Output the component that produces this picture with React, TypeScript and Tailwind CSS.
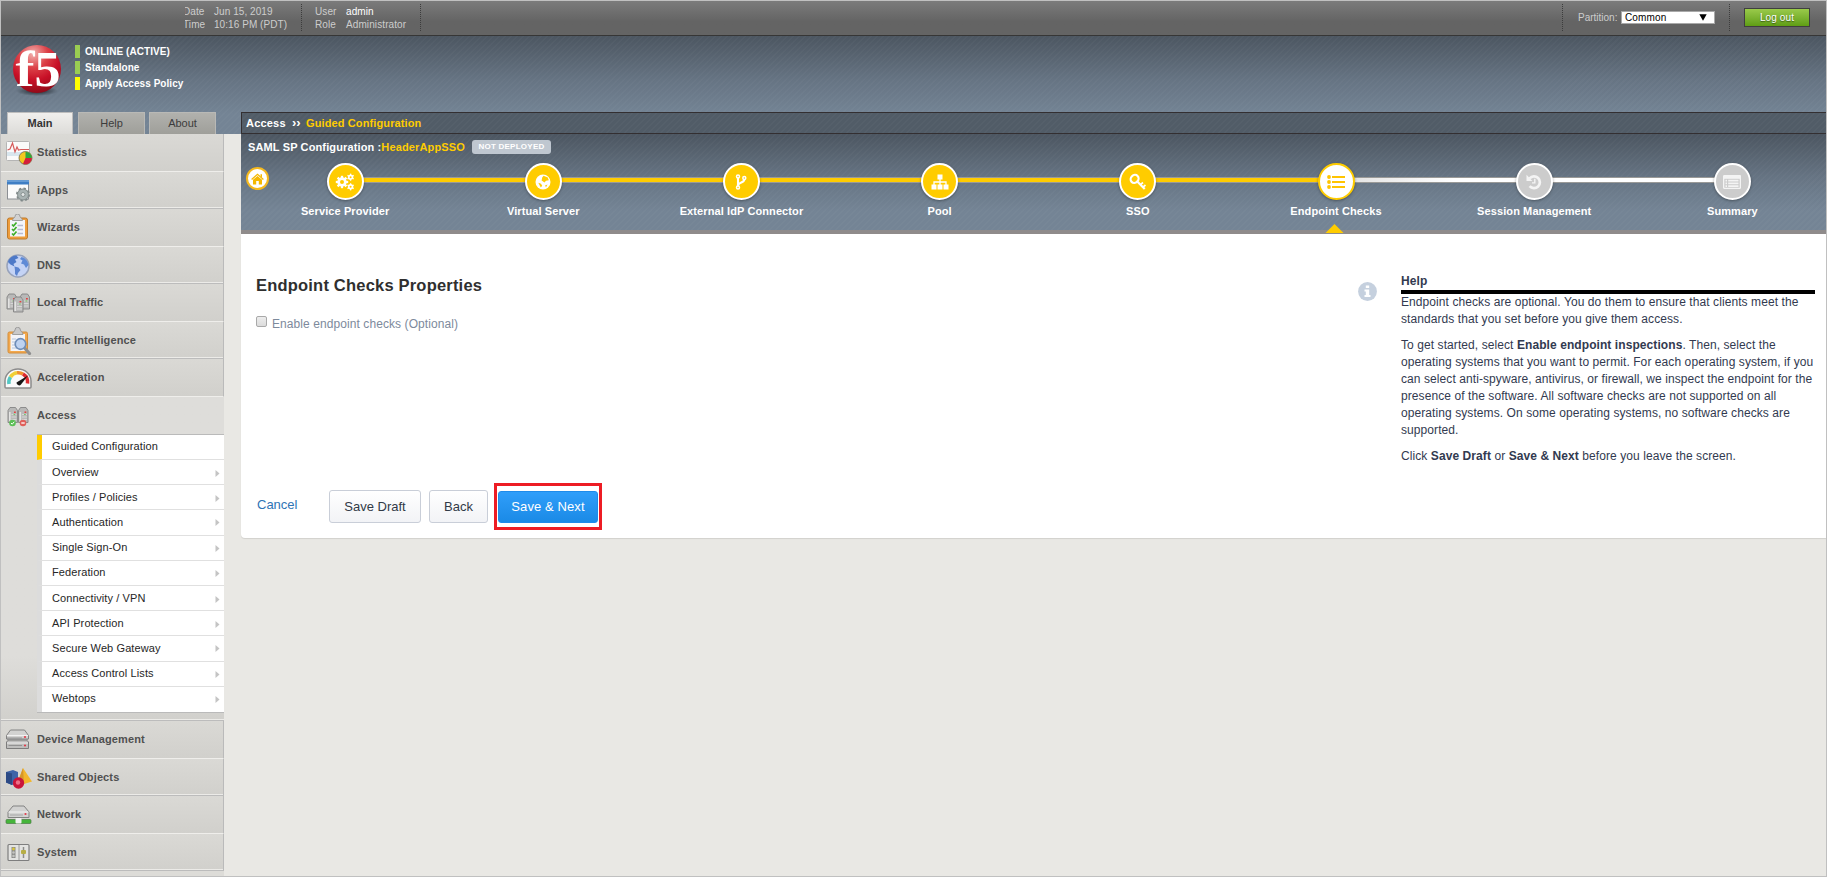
import React from "react";

const STRIPES =
  "bg-[repeating-linear-gradient(135deg,rgba(255,255,255,0.024)_0,rgba(255,255,255,0.024)_1.5px,transparent_1.5px,transparent_4.24px),linear-gradient(to_bottom,#4c5661_0%,#667483_45%,#748495_80%,#748495_100%)]";

/* ---------- sidebar icons ---------- */

const StatisticsIcon = () => (
  <svg width="30" height="28" viewBox="0 0 30 28">
    <rect x="1.5" y="2.5" width="23" height="19" rx="1" fill="#fafafa" stroke="#b5b5b5" />
    <rect x="2" y="13" width="22" height="4" fill="#d8e6ee" />
    <path d="M2.500 11 5 10 7.500 4 10 13 12 8 13.500 11 16 10.500H24" fill="none" stroke="#d65a5a" strokeWidth="1.200" />
    <circle cx="20.500" cy="19" r="6.500" fill="#f2c81e" stroke="#6e6a52" strokeWidth=".8" />
    <path d="M20.500 19V12.700A6.300 6.300 0 0 1 26.800 19Z" fill="#2fa63c" />
    <path d="M20.500 19H26.800A6.300 6.300 0 0 1 18 24.800Z" fill="#d31f3c" />
  </svg>
);

const IAppsIcon = () => (
  <svg width="30" height="28" viewBox="0 0 30 28">
    <rect x="2.500" y="3.500" width="21" height="18.500" fill="#fbfbfb" stroke="#8c8f94" />
    <rect x="2" y="3" width="22" height="4.500" fill="#3f7ec4" />
    <path d="M2 4H24" stroke="#8db8e4" />
    <circle cx="18" cy="17.500" r="5.900" fill="#9fa8a8" stroke="#7f8888" strokeWidth="2.200" strokeDasharray="2.300 2.300" />
    <circle cx="18" cy="17.500" r="5.400" fill="#a9b3b3" stroke="#848d8d" strokeWidth=".8" />
    <circle cx="18" cy="17.500" r="2" fill="#e3e6e6" stroke="#7c8585" strokeWidth=".8" />
  </svg>
);

const WizardsIcon = () => (
  <svg width="30" height="28" viewBox="0 0 30 28">
    <rect x="2.500" y="4" width="20" height="21" rx="2" fill="#ee9d3c" stroke="#bf7a2b" />
    <rect x="5" y="6" width="15" height="16.500" fill="#f4f5fa" />
    <path d="M7.500 6.500C7.500 4 9.500 4.500 10 2.500A2.500 2.500 0 0 1 15 2.500C15.500 4.500 17.500 4 17.500 6.500Z" fill="#d2d2d2" stroke="#8f8f8f" strokeWidth=".8" />
    <path d="M7 10.500 8.500 12 11.500 8.500M7 15 8.500 16.500 11.500 13M7 19.500 8.500 21 11.500 17.500" fill="none" stroke="#3fae2a" strokeWidth="1.700" />
    <path d="M12.500 11.500H18M12.500 15.500H18M12.500 19.500H18" stroke="#b8bcd2" strokeWidth="1.400" />
  </svg>
);

const DnsIcon = () => (
  <svg width="30" height="28" viewBox="0 0 30 28">
    <circle cx="13" cy="14" r="11" fill="#c4d3f5" stroke="#98a3bb" strokeWidth="1.500" />
    <path d="M3 10C4 6 7.500 3.500 11.500 3.500L13.500 6 10 7.500 11.500 10 8.500 12 9.500 14.500 5.500 12.500Z" fill="#4d79c8" />
    <path d="M9.500 14.500 13.500 15.500 15.500 18 13 21 12 24 10 22 10 18.500Z" fill="#5b84d0" />
    <path d="M16.500 5C20.500 6 23 9 23.500 13L21 16 19 12.500 16 11.500 17.500 8.500 15 7Z" fill="#5f8ad6" />
  </svg>
);

const Server = ({ x, y }: { x: number; y: number }) => (
  <g transform={`translate(${x} ${y})`}>
    <path d="M.5 3.500 2.500 .5H8L10 3.500V15.500H.5Z" fill="#b9b9b8" stroke="#858585" strokeWidth=".9" />
    <path d="M2.300 5V14.500" stroke="#e3e3e2" strokeWidth="1.600" />
    <path d="M4 7.500H9M4 10H9M4 12.500H9" stroke="#dedede" strokeWidth=".8" />
    <path d="M6.500 5.200H8.300" stroke="#e5423f" strokeWidth="1.500" />
    <path d="M6 7.500H7.800" stroke="#7cc36a" strokeWidth="1.200" />
  </g>
);

const LocalTrafficIcon = () => (
  <svg width="30" height="28" viewBox="0 0 30 28">
    <Server x={1.5} y={4.5} />
    <Server x={14.5} y={4.5} />
    <Server x={8} y={7.5} />
  </svg>
);

const TrafficIntelIcon = () => (
  <svg width="30" height="28" viewBox="0 0 30 28">
    <rect x="3" y="5" width="19.500" height="21" rx="1.500" fill="#f3a84c" stroke="#d28e3c" />
    <rect x="5.500" y="7" width="14.500" height="17" fill="#f3f4f8" />
    <path d="M7.500 7.500C7.500 5 9.500 5 10 3A2.700 2.700 0 0 1 15.400 3C16 5 18 5 18 7.500Z" fill="#c9c9c9" stroke="#8f8f8f" strokeWidth=".8" />
    <path d="M7 12H11M7 15H10M7 18H10M7 21H12" stroke="#b6c6dd" />
    <path d="M19.500 21 24.500 26.500" stroke="#8f8f8f" strokeWidth="3.200" strokeLinecap="round" />
    <circle cx="15.500" cy="17" r="5.300" fill="#bed2f0" stroke="#6e8db8" strokeWidth="1.700" />
  </svg>
);

const AccelerationIcon = () => (
  <svg width="32" height="28" viewBox="0 0 32 28" className="-ml-[2px] shrink-0">
    <path d="M2 23V17A13 12 0 0 1 28 17V23Q28 24 27 24H3Q2 24 2 23Z" fill="#fafafa" stroke="#8b8b8b" strokeWidth="1.500" />
    <path d="M6 20A9.500 9.500 0 0 1 7.500 13" fill="none" stroke="#54c8c4" strokeWidth="3.600" />
    <path d="M7.500 13A9.500 9.500 0 0 1 14 8.800" fill="none" stroke="#f1cf35" strokeWidth="3.600" />
    <path d="M14 8.800A9.500 9.500 0 0 1 20 10" fill="none" stroke="#f0902c" strokeWidth="3.600" />
    <path d="M20 10A9.500 9.500 0 0 1 24.500 19.500" fill="none" stroke="#de2b30" strokeWidth="3.600" />
    <path d="M13.500 18.500 25 11.500 18 20.500A2.600 2.600 0 0 1 13.500 18.500Z" fill="#161616" />
  </svg>
);

const AccessIcon = () => (
  <svg width="30" height="28" viewBox="0 0 30 28">
    <Server x={2.5} y={5} />
    <Server x={13} y={5} />
    <circle cx="7.500" cy="21" r="3.300" fill="#5bbf56" />
    <path d="M6 21 7.200 22.200 9.200 19.800" stroke="#fff" fill="none" />
    <circle cx="18" cy="21" r="3.300" fill="#e0605a" />
    <path d="M16.300 21H19.700" stroke="#fff" strokeWidth="1.300" />
  </svg>
);

const DeviceIcon = () => (
  <svg width="30" height="28" viewBox="0 0 30 28">
    <path d="M1.500 9.500 5.500 4H19.500L23.500 9.500V13H1.500Z" fill="#d2d2d1" stroke="#828282" />
    <path d="M1.500 16 3.500 14H21.500L23.500 16V22.500H1.500Z" fill="#bebebd" stroke="#7c7c7c" />
    <path d="M2 9.500H23M2 17H23" stroke="#f1f1f1" />
    <path d="M2 12H17M2 13.500H23M3.500 19.500H17" stroke="#929292" />
    <circle cx="20" cy="11" r="1.100" fill="#e23b4b" />
    <circle cx="20" cy="19.500" r="1.100" fill="#e23b4b" />
  </svg>
);

const SharedIcon = () => (
  <svg width="32" height="28" viewBox="0 0 32 28" className="-ml-px shrink-0">
    <path d="M2 8 9 6 14 8V19L8 21 2 18.500Z" fill="#3d63a8" />
    <path d="M8 9.500V21L2 18.500V8Z" fill="#2c4a85" />
    <path d="M19 4 28 17.500 20 20 14 17.500Z" fill="#f2b62c" />
    <path d="M19 4 20 20 14 17.500Z" fill="#d6962a" />
    <circle cx="14.500" cy="19" r="5.700" fill="#c9143a" />
    <circle cx="14" cy="18.500" r="2.200" fill="#ee6f87" />
  </svg>
);

const NetworkIcon = () => (
  <svg width="30" height="28" viewBox="0 0 30 28">
    <path d="M3 11 8 5H19L24 11V16.500H3Z" fill="#d2d2d1" stroke="#828282" />
    <path d="M3.500 11H23.500" stroke="#f3f3f3" />
    <path d="M5 14H18" stroke="#a6a6a6" />
    <circle cx="20.500" cy="13" r="1.100" fill="#e23b4b" />
    <rect x="1" y="18.500" width="25" height="4" rx="1" fill="#45b53a" stroke="#4a7a45" strokeWidth=".7" />
    <rect x="10.500" y="17" width="6" height="5.500" rx="1" fill="#f1f1f1" />
  </svg>
);

const SystemIcon = () => (
  <svg width="30" height="28" viewBox="0 0 30 28">
    <rect x="3" y="5.500" width="21" height="16" rx="1" fill="#e3e3e1" stroke="#7e7e7e" strokeWidth="1.200" />
    <path d="M14 6V21" stroke="#9a9a9a" />
    <rect x="6.500" y="8" width="4" height="11" fill="#8c8c8a" />
    <circle cx="8.500" cy="10" r="1.400" fill="#d9c63a" />
    <circle cx="8.500" cy="13.500" r="1.300" fill="#c3c3c0" />
    <circle cx="8.500" cy="17" r="1.300" fill="#c3c3c0" />
    <path d="M18.500 8V19" stroke="#8c8c8a" strokeWidth="1.500" />
    <rect x="16" y="11" width="5" height="4" rx="1" fill="#b7ae45" />
  </svg>
);

/* ---------- wizard step icons ---------- */

const gear = (cx: number, cy: number, r: number, hole: number, teeth: number) => (
  <>
    <circle cx={cx} cy={cy} r={(r + hole) / 2} fill="none" stroke="currentColor" strokeWidth={r - hole} />
    {Array.from({ length: teeth }, (_, i) => (
      <rect
        key={i}
        x={cx - r * 0.24}
        y={cy - r * 1.32}
        width={r * 0.48}
        height={r * 0.6}
        fill="currentColor"
        transform={`rotate(${(360 / teeth) * i} ${cx} ${cy})`}
      />
    ))}
  </>
);

const GearsIcon = () => (
  <svg width="20" height="18" viewBox="0 0 20 18">
    {gear(7, 9, 4.7, 2, 8)}
    {gear(15.6, 4.2, 2.7, 1, 6)}
    {gear(15.6, 13.8, 2.7, 1, 6)}
  </svg>
);

const GlobeIcon = () => (
  <svg width="16" height="16" viewBox="0 0 16 16">
    <circle cx="8" cy="8" r="7.500" fill="currentColor" />
    <path d="M8.500 1.800 12.800 3.500 13.800 6.200 11 6.800 9.500 8.600 6.600 6.400 7.200 3.600Z" fill="#fc0" />
    <path d="M3.300 8.800 6 9.800 7.200 11.800 5.800 13.600Z" fill="#fc0" />
    <path d="M10 11.500 12.500 10.500 11 13.300Z" fill="#fc0" />
  </svg>
);

const ForkIcon = () => (
  <svg width="12" height="16" viewBox="0 0 12 16" fill="none" stroke="currentColor">
    <circle cx="3" cy="2.600" r="1.500" strokeWidth="1.500" />
    <circle cx="9.300" cy="3.900" r="1.500" strokeWidth="1.500" />
    <circle cx="3" cy="13.400" r="1.500" strokeWidth="1.500" />
    <path d="M3 4V12M9.300 5.500C9.300 9 3.500 8 3 11.500" strokeWidth="2.100" />
  </svg>
);

const SitemapIcon = () => (
  <svg width="18" height="16" viewBox="0 0 18 16">
    <path d="M6.500 .5h5v5h-5ZM.5 10.500h5v5h-5ZM6.500 10.500h5v5h-5ZM12.500 10.500h5v5h-5Z" fill="currentColor" />
    <path d="M9 5V11M3 11V8H15V11" fill="none" stroke="currentColor" strokeWidth="1.300" />
  </svg>
);

const KeyIcon = () => (
  <svg width="18" height="18" viewBox="0 0 18 18" fill="none" stroke="currentColor">
    <ellipse cx="5.600" cy="5.900" rx="4.200" ry="3.700" transform="rotate(-45 5.600 5.900)" strokeWidth="2.200" />
    <path d="M8.300 8.500 15.700 16" strokeWidth="2.200" />
    <path d="M11.500 11.700 14 9.500M14 14.200 16.500 12" strokeWidth="1.700" />
  </svg>
);

const ListIcon = () => (
  <svg width="18" height="14" viewBox="0 0 18 14">
    <circle cx="2" cy="2" r="1.900" fill="currentColor" />
    <circle cx="2" cy="7" r="1.900" fill="currentColor" />
    <circle cx="2" cy="12" r="1.900" fill="currentColor" />
    <path d="M5 2H18M5 7H18M5 12H18" stroke="currentColor" strokeWidth="2.200" />
  </svg>
);

const HistoryIcon = () => (
  <svg width="16" height="16" viewBox="0 0 16 16" fill="none" stroke="currentColor">
    <path d="M3.600 4.300A5.900 5.900 0 1 1 3.600 12.200" strokeWidth="2.700" />
    <path d="M.5 .8V6.900H6.400Z" fill="currentColor" stroke="none" />
    <path d="M8.800 4.700V8.900H6" strokeWidth="1.400" />
  </svg>
);

const ListAltIcon = () => (
  <svg width="18" height="14" viewBox="0 0 18 14">
    <rect x=".6" y=".6" width="16.800" height="12.800" rx="1" fill="none" stroke="currentColor" strokeWidth="1.400" />
    <rect x=".6" y=".6" width="16.800" height="3.200" fill="currentColor" />
    <path d="M2.500 5.700H4M5.200 5.700H15.500M2.500 8.400H4M5.200 8.400H15.500M2.500 11.100H4M5.200 11.100H15.500" stroke="currentColor" strokeWidth="1.800" />
  </svg>
);

const HomeIcon = () => (
  <svg width="13" height="12" viewBox="0 0 13 12">
    <path d="M2 6.800 6.500 3 11 6.800V11.500H7.800V8H5.200V11.500H2Z" fill="#f5b800" />
    <path d="M.6 6.400 6.500 1.300 12.400 6.400" fill="none" stroke="#f5b800" strokeWidth="1.300" />
    <path d="M9.500 1.200H11V4.500L9.500 3.200Z" fill="#f5b800" />
  </svg>
);

const Logo = () => (
  <svg width="52" height="54" viewBox="0 0 52 54" className="shrink-0 overflow-visible">
    <defs>
      <radialGradient id="ball" cx="42%" cy="18%" r="85%">
        <stop offset="0" stopColor="#f2b3b0" />
        <stop offset=".35" stopColor="#dc4148" />
        <stop offset=".65" stopColor="#c81027" />
        <stop offset="1" stopColor="#8d0a17" />
      </radialGradient>
      <radialGradient id="shade">
        <stop offset="0" stopColor="#1d242b" />
        <stop offset="1" stopColor="#1d242b" stopOpacity="0" />
      </radialGradient>
    </defs>
    <ellipse cx="26" cy="47" rx="21" ry="5" fill="url(#shade)" />
    <circle cx="26" cy="25" r="24" fill="url(#ball)" />
    <text x="4.500" y="42" fontFamily="Liberation Serif, serif" fontWeight="700" fontSize="50" fill="#fff" textLength="19" lengthAdjust="spacingAndGlyphs">
      f
    </text>
    <text x="23.500" y="42" fontFamily="Liberation Serif, serif" fontWeight="700" fontSize="50" fill="#fff" textLength="26" lengthAdjust="spacingAndGlyphs">
      5
    </text>
  </svg>
);

/* ---------- data ---------- */

const navTop = [
  { label: "Statistics", icon: <StatisticsIcon /> },
  { label: "iApps", icon: <IAppsIcon /> },
  { label: "Wizards", icon: <WizardsIcon /> },
  { label: "DNS", icon: <DnsIcon /> },
  { label: "Local Traffic", icon: <LocalTrafficIcon /> },
  { label: "Traffic Intelligence", icon: <TrafficIntelIcon /> },
  { label: "Acceleration", icon: <AccelerationIcon /> },
];

const navBottom = [
  { label: "Device Management", icon: <DeviceIcon /> },
  { label: "Shared Objects", icon: <SharedIcon /> },
  { label: "Network", icon: <NetworkIcon /> },
  { label: "System", icon: <SystemIcon /> },
];

const submenu = [
  { label: "Overview", h: "h-[25px] pt-px" },
  { label: "Profiles / Policies", h: "h-[25px] pt-px" },
  { label: "Authentication", h: "h-[26px] pb-px" },
  { label: "Single Sign-On", h: "h-[25px] pb-px" },
  { label: "Federation", h: "h-[25px] pb-px" },
  { label: "Connectivity / VPN", h: "h-[25px] pt-px" },
  { label: "API Protection", h: "h-[25px] pt-px" },
  { label: "Secure Web Gateway", h: "h-[26px] pb-px" },
  { label: "Access Control Lists", h: "h-[25px] pb-px" },
];

const steps = [
  { label: "Service Provider", icon: <GearsIcon />, state: "done" },
  { label: "Virtual Server", icon: <GlobeIcon />, state: "done" },
  { label: "External IdP Connector", icon: <ForkIcon />, state: "done" },
  { label: "Pool", icon: <SitemapIcon />, state: "done" },
  { label: "SSO", icon: <KeyIcon />, state: "done" },
  { label: "Endpoint Checks", icon: <ListIcon />, state: "current" },
  { label: "Session Management", icon: <HistoryIcon />, state: "todo" },
  { label: "Summary", icon: <ListAltIcon />, state: "todo" },
];

const circleClass: Record<string, string> = {
  done: "border-white bg-[#ffcc00] text-white",
  current: "border-[#ffcc00] bg-white text-[#ffc400]",
  todo: "border-white bg-[#cccccc] text-[#f4f4f4]",
};

/* ---------- pieces ---------- */

function NavItem({ item, index }: { item: { label: string; icon: React.ReactNode }; index: number }) {
  const even = index % 2 === 1;
  return (
    <div
      className={
        "flex items-center border-r border-r-[#bababa] bg-gradient-to-b from-[#dad9d5] to-[#d1d0cc] " +
        (even ? "h-[37px] border-b border-b-[#bcbcbc] pt-px shadow-[inset_0_-1px_0_#ecebe8]" : "h-[38px] border-b border-b-[#efeeeb]")
      }
    >
      <span className="flex h-[28px] w-[36px] shrink-0 items-center pl-[4px]">{item.icon}</span>
      <span className={"text-[11px] font-bold leading-[14px] tracking-[0.12px] text-[#505050] " + (even ? "pb-px" : "pb-[2px]")}>{item.label}</span>
    </div>
  );
}

const VDots = () => <span className="h-[27px] w-px border-l border-dotted border-[#3c3c3c]" />;

const Arrow = () => (
  <svg width="5" height="7" viewBox="0 0 5 7" className="mt-px">
    <path d="M.5 0 4.500 3.500 .5 7Z" fill="#c4c4c4" />
  </svg>
);

export default function App() {
  return (
    <div className="flex h-[877px] w-full flex-col overflow-hidden border border-[#c0c0c0] bg-[#e9e8e4] font-['Liberation_Sans',Arial,sans-serif]">
      {/* top bar */}
      <div className="flex h-[35px] shrink-0 items-start border-b border-[#363636] bg-gradient-to-b from-[#7b7b7b] to-[#646464] to-60% pt-[3px] text-[10px] leading-[13px] text-[#cdcdcd]">
        <div className="ml-[184px] w-[29px] overflow-hidden">
          <div className="-ml-[2px] pt-px tracking-[0.1px]">
            Date
            <br />
            Time
          </div>
        </div>
        <div className="w-[87px] whitespace-nowrap pt-px leading-[13px] tracking-[0.06px]">
          Jun 15, 2019
          <br />
          10:16 PM (PDT)
        </div>
        <VDots />
        <div className="ml-[13px] w-[31px] pt-px tracking-[0.1px]">
          User
          <br />
          Role
        </div>
        <div className="w-[74px] whitespace-nowrap pt-px tracking-[0.1px]">
          <span className="text-white">admin</span>
          <br />
          Administrator
        </div>
        <VDots />
        <div className="ml-auto flex">
          <VDots />
          <div className="ml-[15px] flex w-[151px] items-start pt-[7px]">
            <span className="w-[43px]">Partition:</span>
            <div className="flex h-[13px] w-[94px] items-center justify-between border border-[#a9a9a9] bg-white pl-[3px] pr-[7px] text-black">
              <span className="tracking-[0.15px]">Common</span>
              <svg width="8" height="7" viewBox="0 0 8 7">
                <path d="M.3 .3H7.700L4 6.800Z" fill="#000" />
              </svg>
            </div>
          </div>
          <VDots />
          <button className="ml-[14px] mr-[16px] mt-[4px] h-[19px] w-[66px] border border-[#3f3f3f] bg-gradient-to-b from-[#9aca4a] to-[#5f9e12] text-[10px] leading-[17px] tracking-[0.1px] text-white [text-shadow:0_1px_1px_#3d5a12]">
            Log out
          </button>
        </div>
      </div>

      {/* blue header with status and tabs */}
      <header className={"flex h-[98px] shrink-0 flex-col justify-between " + STRIPES}>
        <div className="flex pt-[8px]">
          <div className="h-[54px] w-[74px] pl-[10px]">
            <Logo />
          </div>
          <div className="mt-px flex flex-col gap-[3px] text-[10px] font-bold leading-[13px] text-white">
            <div className="flex h-[13px] gap-[5px]">
              <i className="w-[5px] bg-[#9acd52]" />
              <span className="tracking-[0.07px]">ONLINE (ACTIVE)</span>
            </div>
            <div className="flex h-[13px] gap-[5px]">
              <i className="w-[5px] bg-[#9acd52]" />
              <span className="tracking-[0.05px]">Standalone</span>
            </div>
            <div className="flex h-[13px] gap-[5px]">
              <i className="w-[5px] bg-[#ffff00]" />
              <span className="tracking-[0.05px]">Apply Access Policy</span>
            </div>
          </div>
        </div>
        <div className="flex h-[22px] pl-[6px] text-center text-[11px] leading-[21px] text-[#3c3c3c]">
          <div className="mr-[5px] w-[66px] border border-b-0 border-[#bdbdbd] bg-gradient-to-b from-[#f0efed] to-[#dddcd9] font-bold text-[#333]">Main</div>
          <div className="mr-[4px] w-[67px] border border-b-0 border-[#b9b9b6] bg-gradient-to-b from-[#b1b1ad] to-[#9f9f9a]">Help</div>
          <div className="w-[67px] border border-b-0 border-[#b9b9b6] bg-gradient-to-b from-[#b1b1ad] to-[#9f9f9a]">About</div>
        </div>
      </header>

      <div className="flex min-h-0 flex-1">
        {/* sidebar */}
        <nav className="w-[223px] shrink-0 bg-[#dddcd8]">
          {navTop.map((it, i) => (
            <NavItem key={it.label} item={it} index={i} />
          ))}
          <div className="h-[324px] bg-gradient-to-b from-[#dedddA] from-80% to-[#d1d0cc] shadow-[inset_0_-1px_0_#bcbcbc,inset_0_-2px_0_#ecebe8]">
            <div className="flex h-[37px] items-center">
              <span className="flex h-[28px] w-[36px] shrink-0 items-center pl-[4px]">
                <AccessIcon />
              </span>
              <span className="pb-[2px] text-[11px] font-bold leading-[14px] tracking-[0.12px] text-[#505050]">Access</span>
            </div>
            <ul className="ml-[36px] border-y border-[#bababa] text-[11px] tracking-[0.1px] text-[#262626]">
              <li className="flex h-[25px] items-center border-b border-l-[5px] border-b-[#e0e0e0] border-l-[#ffcc00] bg-white pb-[2px] pl-[10px]">
                Guided Configuration
              </li>
              {submenu.map((s) => (
                <li
                  key={s.label}
                  className={"flex items-center justify-between border-b border-l-[5px] border-b-[#e0e0e0] border-l-[#dcdcdc] bg-white pl-[10px] pr-[4px] " + s.h}
                >
                  {s.label}
                  <Arrow />
                </li>
              ))}
              <li className="flex h-[25px] items-center justify-between border-l-[5px] border-l-[#dcdcdc] bg-white pb-[2px] pl-[10px] pr-[4px]">
                Webtops
                <Arrow />
              </li>
            </ul>
          </div>
          {navBottom.map((it, i) => (
            <NavItem key={it.label} item={it} index={i} />
          ))}
        </nav>

        {/* content */}
        <main className="relative -mt-[22px] ml-[17px] min-w-0 flex-1">
          <div className="flex h-[22px] items-center border-y border-l border-[#332f31] bg-[#515c67] bg-[repeating-linear-gradient(135deg,rgba(255,255,255,0.025)_0,rgba(255,255,255,0.025)_1.5px,transparent_1.5px,transparent_4.24px)] pl-[4px] text-[11px] font-bold text-white">
            <span className="w-[46px] tracking-[0.2px]">Access</span>
            <span className="w-[14px] text-[13px]">››</span>
            <span className="tracking-[0.12px] text-[#fc0]">Guided Configuration</span>
          </div>

          <section className={"relative h-[100px] overflow-hidden border-b-[4px] border-b-[#8f8b8b] " + STRIPES}>
            <div className="flex h-[28px] items-center pb-[2px] pl-[7px] text-[11px] font-bold leading-[14px] text-white">
              <span className="tracking-[0.13px]">SAML SP Configuration :</span>
              <span className="tracking-[0.14px] text-[#fc0]">HeaderAppSSO</span>
              <span className="ml-[7px] h-[14px] w-[79px] rounded-[3px] bg-[#bfc7d0] text-center text-[8px] leading-[14px] tracking-[0.25px] text-white">NOT DEPLOYED</span>
            </div>
            <ol className="relative ml-[5px] flex">
              {steps.map((s, i) => (
                <li key={s.label} className="relative flex w-[198.2px] shrink-0 flex-col items-center pt-px">
                  {i < steps.length - 1 && (
                    <span
                      className={
                        "absolute left-1/2 top-[15px] h-[6px] w-full border-y border-[#9a9a98] " +
                        (i < 5 ? "bg-[#ffcc00]" : i === 5 ? "bg-gradient-to-r from-[#e0e0e0] to-white to-60%" : "bg-white")
                      }
                    />
                  )}
                  <span className={"relative z-10 flex h-[37px] w-[37px] items-center justify-center rounded-full border-2 shadow-[0_1px_3px_rgba(0,0,0,0.35)] " + circleClass[s.state]}>
                    {s.icon}
                  </span>
                  <span className="mt-[4px] whitespace-nowrap text-[11px] font-bold leading-[14px] tracking-[0.1px] text-white">{s.label}</span>
                </li>
              ))}
            </ol>
            <span className="absolute left-[5px] top-[33px] flex h-[23px] w-[23px] items-center justify-center rounded-full border-2 border-[#f5b91e] bg-white">
              <HomeIcon />
            </span>
          </section>
          <svg className="absolute left-[1084px] top-[111px]" width="20" height="10" viewBox="0 0 20 10">
            <path d="M9.500 1 18.500 10H.5Z" fill="#fc0" />
          </svg>

          <section className="flex h-[304px] rounded-bl-[4px] bg-white shadow-[0_1px_1px_rgba(0,0,0,0.1)]">
            <div className="w-[1117px] pl-[15px] pt-[41px]">
              <h1 className="text-[16.5px] font-bold leading-[20px] tracking-[0.2px] text-[#2f2f2f]">Endpoint Checks Properties</h1>
              <label className="mt-[19px] flex h-[20px] items-start text-[12px] leading-[20px] text-[#7d8a9c]">
                <span className="mr-[5px] mt-[2px] h-[11px] w-[11px] rounded-[2px] border border-[#a9a9a9] bg-gradient-to-b from-[#ededed] to-[#dcdcdc]" />
                <span className="tracking-[0.08px]">Enable endpoint checks (Optional)</span>
              </label>
              <div className="mt-[149px] flex items-center text-[13px] text-[#323a47]">
                <a className="-mt-[4px] w-[73px] pl-px text-[#2f74b5]">Cancel</a>
                <button className="mr-[8px] h-[33px] w-[92px] rounded-[3px] border border-[#c9ced8] bg-gradient-to-b from-white to-[#f2f3f6]">Save Draft</button>
                <button className="mr-[6px] h-[33px] w-[59px] rounded-[3px] border border-[#c9ced8] bg-gradient-to-b from-white to-[#f2f3f6]">Back</button>
                <div className="flex h-[47px] w-[108px] items-center justify-center border-[3px] border-[#ed1c24]">
                  <button className="h-[32px] w-[100px] rounded-[3px] border border-[#1f8bea] bg-gradient-to-b from-[#2f9efa] to-[#1a8ae6] tracking-[0.1px] text-white">Save &amp; Next</button>
                </div>
              </div>
            </div>
            <div className="w-[43px] pt-[48px]">
              <svg width="19" height="19" viewBox="0 0 19 19">
                <circle cx="9.500" cy="9.500" r="9.400" fill="#c5d0de" />
                <path d="M7.800 3.500H11.200V6H7.800ZM6.500 7.500H11.200V13H12.500V15H6.500V13H7.800V9.500H6.500Z" fill="#fff" />
              </svg>
            </div>
            <div className="w-[414px] pt-[39px] text-[12px] leading-[17px] tracking-[0.08px] text-[#323a50]">
              <h2 className="border-b-[4px] border-black font-bold">Help</h2>
              <p className="whitespace-nowrap">
                Endpoint checks are optional. You do them to ensure that clients meet the
                <br />
                standards that you set before you give them access.
              </p>
              <p className="mt-[9px] whitespace-nowrap">
                To get started, select <b>Enable endpoint inspections</b>. Then, select the
                <br />
                operating systems that you want to permit. For each operating system, if you
                <br />
                can select anti-spyware, antivirus, or firewall, we inspect the endpoint for the
                <br />
                presence of the software. All software checks are not supported on all
                <br />
                operating systems. On some operating systems, no software checks are
                <br />
                supported.
              </p>
              <p className="mt-[9px] whitespace-nowrap">
                Click <b>Save Draft</b> or <b>Save &amp; Next</b> before you leave the screen.
              </p>
            </div>
          </section>
        </main>
      </div>
    </div>
  );
}
